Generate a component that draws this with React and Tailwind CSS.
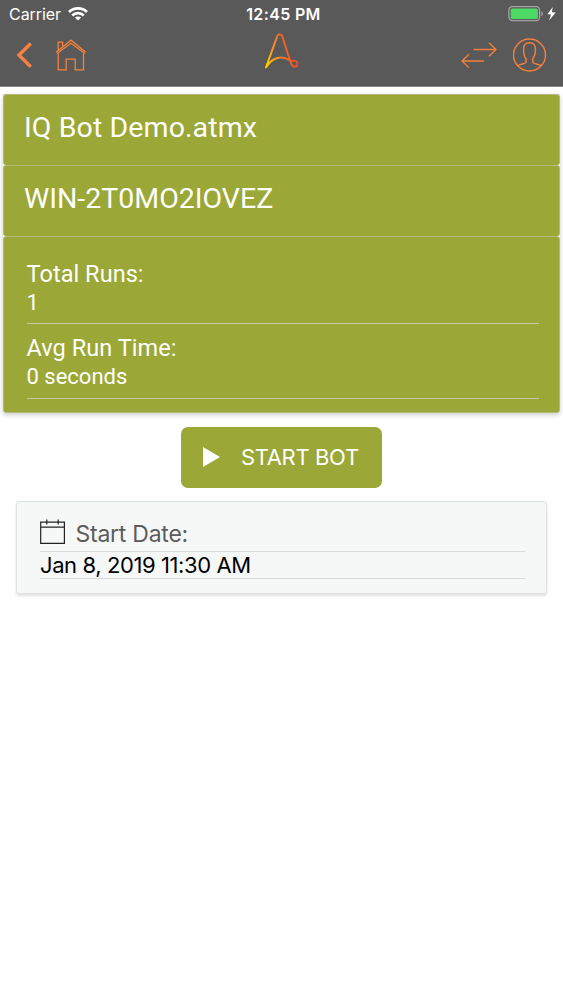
import React from "react";

const stats = [
  { label: "Total Runs:", value: "1" },
  { label: "Avg Run Time:", value: "0 seconds" },
];

const WifiIcon = () => (
  <svg width="20" height="14" viewBox="0 0 20 14" fill="none" stroke="white" strokeWidth="2.7">
    <path d="M1 5 C6 0.2 14 0.2 19 5" />
    <path d="M4.2 8.5 C7.5 5.4 12.5 5.4 15.8 8.5" />
    <path d="M10 13.5 L6.9 10.5 C8.6 9 11.4 9 13.1 10.5 Z" fill="white" stroke="none" />
  </svg>
);

const BatteryIcon = () => (
  <svg width="49" height="18" viewBox="0 0 49 18" fill="none">
    <rect x="0.9" y="1.6" width="30.7" height="14" rx="3.5" stroke="#a5a5a5" strokeWidth="1.3" />
    <rect x="2.7" y="3.4" width="27.2" height="10.6" rx="1.8" fill="#4cd964" />
    <path d="M33.4 6.2 C35.3 6.9 35.3 10.5 33.4 11.2 Z" fill="#a5a5a5" />
    <path d="M44.8 1.9 L39.3 9.2 L43 9.5 L41.1 15.6 L47.7 7.6 L43.8 7.2 Z" fill="white" />
  </svg>
);

const HomeIcon = () => (
  <svg width="32" height="32" viewBox="0 0 32 32" fill="none" stroke="#f5803e" strokeWidth="1.3">
    <path d="M1.2 13.2 L16 1.2 L30.8 13.2" />
    <path d="M2 14.6 L16 4.2 L30 14.6" />
    <path d="M3.2 14.2 V30.8 H11.2 V20.2 H20.2 V30.8 H28.5 V14.2" />
    <path d="M3.2 11.2 V3.2 H7.6 V7.6" />
  </svg>
);

const Logo = () => (
  <svg width="35" height="37" viewBox="0 0 35 37" fill="none">
    <defs>
      <linearGradient id="logo" x1="1" y1="30" x2="28" y2="22" gradientUnits="userSpaceOnUse">
        <stop offset="0" stopColor="#ffd000" />
        <stop offset="0.5" stopColor="#f98b28" />
        <stop offset="1" stopColor="#ed5128" />
      </linearGradient>
    </defs>
    <path
      d="M2 34.4 L13.1 3.6 C14 0.6 17.5 0.6 18.5 3.6 L26.5 29.1 C27.9 33.6 31.3 35.1 33 32.6 C34.6 29.8 32 26.9 28.9 27.8 C26.1 28.6 24.3 25.9 20.8 25 C13 23 6 27.3 2 34.4 Z"
      stroke="url(#logo)"
      strokeWidth="1.9"
      strokeLinejoin="round"
    />
  </svg>
);

const SwapIcon = () => (
  <svg width="36" height="26" viewBox="0 0 36 26" fill="none" stroke="#f5803e" strokeWidth="1.3">
    <path d="M12.5 7.5 H35 M28 0.7 L35 7.5 L28 14.3" />
    <path d="M23 19 H1 M8 12.2 L1 19 L8 25.6" />
  </svg>
);

const ProfileIcon = () => (
  <svg width="34" height="34" viewBox="0 0 34 34" fill="none" stroke="#f5803e" strokeWidth="1.4">
    <circle cx="16.5" cy="17" r="16" />
    <path d="M4.8 27.8 C7.3 25.7 12.8 26 13.1 24 L13 20.8 C10.7 18 10.5 14.6 10.6 10.8 C10.7 7 12.9 4.7 16.5 4.7 C20.1 4.7 22.3 7 22.4 10.8 C22.5 14.6 22 18 19.7 20.8 V24 C20 26 25.5 25.7 28.2 27.8" />
  </svg>
);

const CalendarIcon = () => (
  <svg width="26" height="26" viewBox="0 0 26 26" fill="none" stroke="#222" strokeWidth="1.2">
    <path d="M0.7 3.2 H24.4 V24.3 H0.7 Z M0.7 8.2 H24.4" />
    <path d="M6.8 0.5 V5.5 M18.2 0.5 V5.5" />
  </svg>
);

const Header = () => (
  <header className="h-[87px] bg-[#595959] border-b border-[#858585]">
    <div className="grid grid-cols-3 h-7 pl-[9px] pr-[6px] text-white">
      <div className="flex items-center gap-[7px] text-[16px] tracking-[-0.05px]">
        <span>Carrier</span>
        <WifiIcon />
      </div>
      <div className="pl-px text-center leading-7 text-[16px] font-semibold tracking-[0.35px]">12:45 PM</div>
      <div className="flex items-center justify-end">
        <BatteryIcon />
      </div>
    </div>
    <nav className="grid grid-cols-[1fr_auto_1fr] items-center h-[54px] pl-4 pr-[16.5px]">
      <div className="flex items-center gap-[22px]">
        <svg width="17" height="26" viewBox="0 0 17 26" fill="none" stroke="#f9813f" strokeWidth="3.4">
          <path d="M14.8 1.5 L3 13.1 L14.8 24.8" />
        </svg>
        <HomeIcon />
      </div>
      <div className="-mt-2">
        <Logo />
      </div>
      <div className="flex items-center justify-end gap-4">
        <SwapIcon />
        <ProfileIcon />
      </div>
    </nav>
  </header>
);

const App = () => {
  return (
    <div className="min-h-screen bg-white font-['Inter',sans-serif]">
      <Header />

      {/* Bot details */}
      <section className="mx-[3px] mt-[7px] font-['Roboto',sans-serif] text-white rounded-[3px] shadow-[0_2px_5px_rgba(0,0,0,0.2)]">
        <div className="h-[71px] px-[20px] bg-[#9ba736] border border-b-0 border-[#b4ba7c] rounded-[3px]">
          <h1 className="leading-[65px] text-[28.5px] tracking-[0.1px]">IQ Bot Demo.atmx</h1>
        </div>
        <div className="h-[71px] px-[20px] bg-[#9ba736] border border-b-0 border-[#b4ba7c] rounded-[3px]">
          <h2 className="leading-[65px] text-[28.5px]">WIN-2T0MO2IOVEZ</h2>
        </div>
        <div className="h-[177px] pl-[22.5px] pr-5 pt-[12.5px] bg-[#9ba736] border border-[#b4ba7c] rounded-[3px]">
          {stats.map((s) => (
            <div key={s.label} className="h-[74.5px] pt-2 border-b-[1.5px] border-[#c5c8a5]">
              <div className="h-[30px] leading-[32px] text-[23.5px] tracking-[0.05px]">{s.label}</div>
              <div className="h-[30px] leading-[30px] text-[22px]">{s.value}</div>
            </div>
          ))}
        </div>
      </section>

      <button className="flex items-center w-[201px] h-[61px] mt-[14px] mx-auto pl-[22px] bg-[#9ba736] rounded-[7px] text-white">
        <svg width="17" height="20" viewBox="0 0 17 20" fill="white" className="-mt-0.5">
          <path d="M0 0 L17 10 L0 20 Z" />
        </svg>
        <span className="ml-[21px] text-[22px] tracking-[-0.35px]">START BOT</span>
      </button>

      {/* Schedule */}
      <section className="h-[93px] ml-4 mr-4 mt-[13px] pl-[23px] pr-[21px] pt-[14px] bg-[#f6f8f8] border border-[#dfe2e4] rounded-[3px] shadow-[0_2px_3px_rgba(0,0,0,0.12)]">
        <div className="flex items-start gap-[9.5px] h-9 pt-[3px] border-b border-[#d8dadd] text-[#5c5c5c]">
          <CalendarIcon />
          <span className="leading-[31px] text-[23px] tracking-[-0.25px]">Start Date:</span>
        </div>
        <div className="h-[27px] leading-[26px] border-b border-[#d8dadd] text-[22px] tracking-[-0.4px] text-black">
          Jan 8, 2019 11:30 AM
        </div>
      </section>
    </div>
  );
};

export default App;
